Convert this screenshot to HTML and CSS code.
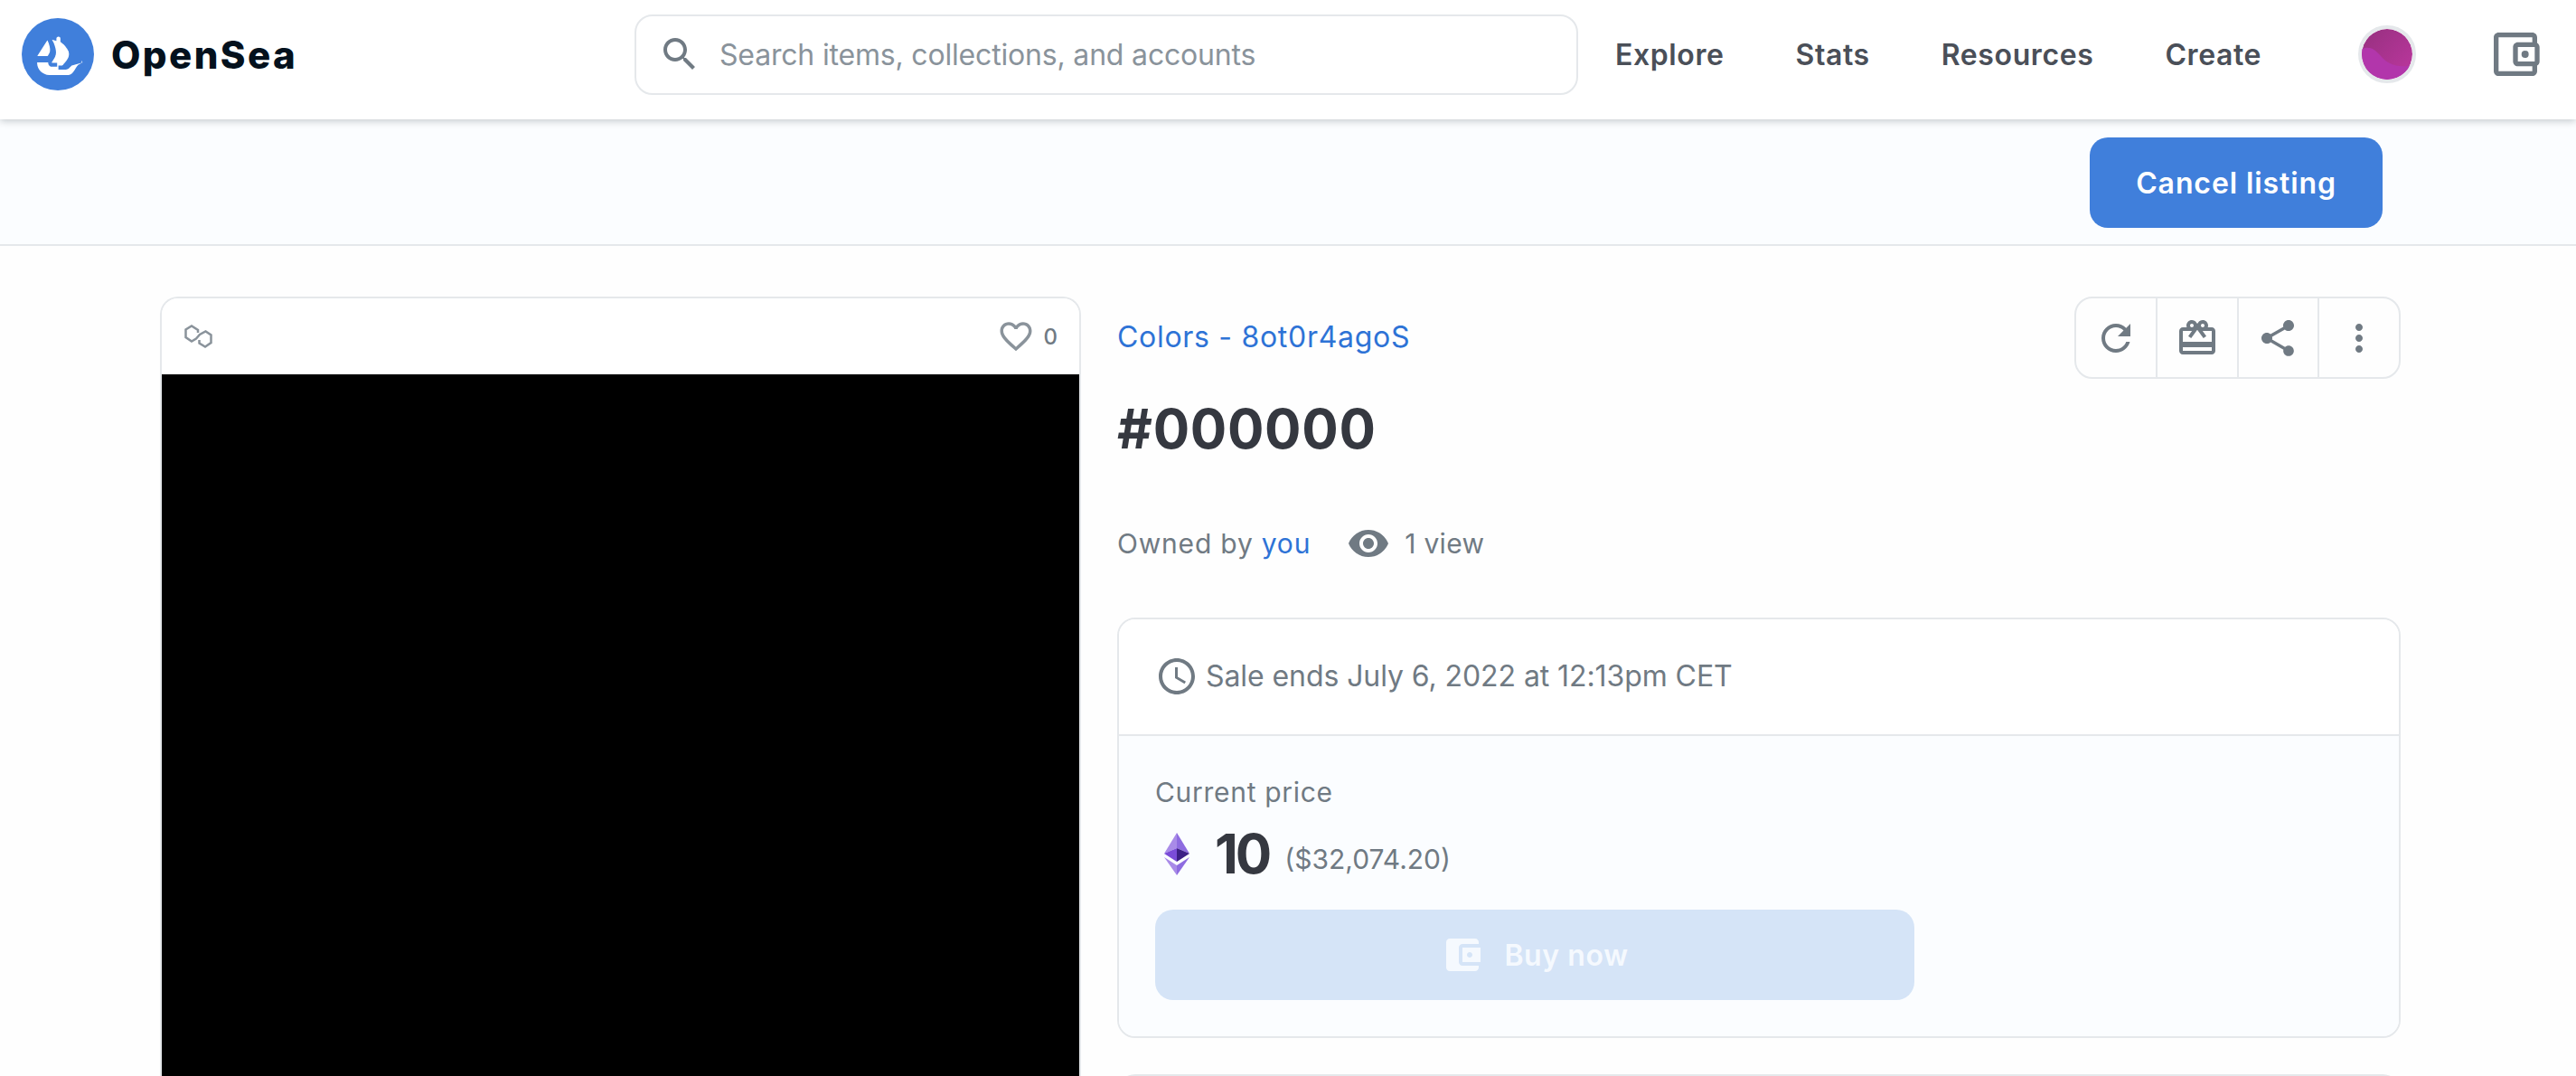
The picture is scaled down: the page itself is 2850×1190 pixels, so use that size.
FILE: index.html
```html
<!DOCTYPE html>
<html lang="en">
<head>
    <meta charset="UTF-8">
    <title>#000000 - Colors - 8ot0r4agoS | OpenSea</title>
    <link rel="stylesheet" href="styles.css">
</head>
<body>
    <header class="topbar">
        <a class="brand">
            <svg class="brand-logo" viewBox="0 0 90 90">
                <circle cx="45" cy="45" r="45" fill="#407fdb"/>
                <path fill="#fff" d="M19.7 46.6l.2-.3 11.7-18.3c.2-.3.6-.2.7.1 2 4.4 3.6 9.8 2.9 13.2-.3 1.4-1.2 3.3-2.3 5.1-.1.3-.3.5-.4.7-.1.1-.2.2-.3.2H20c-.3 0-.5-.4-.3-.7z"/>
                <path fill="#fff" d="M74.6 52.7v2.9c0 .2-.1.3-.2.4-.9.4-4 1.8-5.3 3.6-3.3 4.6-5.8 11.2-11.4 11.2H34.3C26 70.8 19.2 64 19.2 55.7v-.3c0-.2.2-.4.4-.4h13c.3 0 .5.2.4.5-.1.8.1 1.7.5 2.5.8 1.6 2.4 2.6 4.2 2.6h6.4v-5h-6.3c-.3 0-.5-.4-.3-.7l.2-.3c.6-.9 1.5-2.2 2.3-3.7.6-1 1.2-2.1 1.7-3.2.1-.2.2-.4.2-.6.1-.3.2-.7.3-.9.1-.3.2-.5.2-.7.2-.9.3-1.9.3-2.9 0-.4 0-.8-.1-1.2 0-.4-.1-.9-.1-1.3 0-.4-.1-.7-.2-1.1-.1-.5-.2-1.1-.3-1.6l-.1-.2c-.1-.4-.2-.7-.3-1.1-.3-1.1-.7-2.1-1-3.1-.1-.4-.3-.7-.4-1.1-.2-.5-.4-1-.6-1.4-.1-.2-.2-.4-.3-.6-.1-.2-.2-.4-.3-.6l-.2-.4-.8-1.4c-.1-.2.1-.4.3-.4l4.9 1.3v-2.9c0-1.4 1.1-2.5 2.5-2.5.7 0 1.3.3 1.8.7.4.5.7 1.1.7 1.8v4.3l.5.1.1.1.5.4c.2.1.4.3.6.5.4.3.9.7 1.4 1.2.1.1.3.2.4.3.6.6 1.3 1.2 1.9 1.9.2.2.4.4.5.6.2.2.4.5.6.7.2.3.5.6.7.9.1.1.2.3.3.5.3.4.5.7.8 1.1.1.2.2.4.4.6.3.5.5 1 .8 1.5.1.2.2.5.3.7.3.6.5 1.2.6 1.9 0 .1.1.3.1.4 0 .2.1.4.1.6.1.6 0 1.3 0 1.9 0 .5-.1.9-.2 1.4-.1.4-.2.8-.3 1.2-.2.4-.3.8-.5 1.2-.4.8-.8 1.6-1.3 2.3-.2.3-.3.6-.5.8-.2.3-.4.5-.6.8-.2.3-.4.6-.7.9-.2.3-.4.5-.7.8-.3.4-.6.7-.9 1.1-.2.2-.4.5-.6.7-.2.2-.4.5-.6.7-.3.3-.6.6-.8.8l-.5.5-.1.1h-4.8v5H55c1.3 0 2.6-.5 3.6-1.3.4-.3 1.8-1.6 3.5-3.5.1-.1.1-.1.2-.1l13.1-3.8c.3-.1.5.1.5.4z"/>
            </svg>
            <span class="brand-name">OpenSea</span>
        </a>
        <div class="search">
            <svg class="icon icon-search" viewBox="0 0 24 24"><path d="M15.5 14h-.79l-.28-.27C15.41 12.59 16 11.11 16 9.5 16 5.91 13.09 3 9.5 3S3 5.91 3 9.5 5.91 16 9.5 16c1.61 0 3.09-.59 4.23-1.57l.27.28v.79l5 4.99L20.49 19l-4.99-5zm-6 0C7.01 14 5 11.99 5 9.5S7.01 5 9.5 5 14 7.01 14 9.5 11.99 14 9.5 14z"/></svg>
            <span class="search-text">Search items, collections, and accounts</span>
        </div>
        <nav class="nav">
            <a>Explore</a>
            <a>Stats</a>
            <a>Resources</a>
            <a>Create</a>
        </nav>
        <div class="avatar">
            <svg viewBox="0 0 56 56">
                <defs>
                    <linearGradient id="avatarGrad" x1="0" y1="0" x2="1" y2="1">
                        <stop offset="0" stop-color="#96307f"/>
                        <stop offset="1" stop-color="#bd379f"/>
                    </linearGradient>
                </defs>
                <circle cx="28" cy="28" r="28" fill="url(#avatarGrad)"/>
                <path fill="#b236ab" d="M0 22C10 18 16 24 22 31S40 44 56 40V56H0Z"/>
            </svg>
        </div>
        <svg class="icon icon-wallet" viewBox="0 0 24 24"><path d="M21 7.28V5c0-1.1-.9-2-2-2H5c-1.11 0-2 .9-2 2v14c0 1.1.89 2 2 2h14c1.1 0 2-.9 2-2v-2.28c.59-.35 1-.98 1-1.72V9c0-.74-.41-1.37-1-1.72zM20 9v6h-7V9h7zM5 19V5h14v2h-6c-1.1 0-2 .9-2 2v6c0 1.1.9 2 2 2h6v2H5z"/><circle cx="16" cy="12" r="1.5"/></svg>
    </header>

    <div class="actionbar">
        <button class="btn-cancel">Cancel listing</button>
    </div>

    <main class="item">
        <section class="preview">
            <div class="preview-head">
                <svg class="chain" viewBox="0 0 32 26" fill="none" stroke="#8a939b" stroke-width="2.500">
                    <path d="M16 9V6L9 1.500 2.500 5.500V14L9 18.500 14 15.500 18 11 24.500 7.500 30.500 11.500V20L24 24.500 17.500 20.500V17"/>
                </svg>
                <div class="likes">
                    <svg class="icon icon-heart" viewBox="0 0 24 24"><path d="M16.5 3c-1.74 0-3.41.81-4.5 2.09C10.91 3.81 9.24 3 7.5 3 4.420 3 2 5.420 2 8.500c0 3.780 3.400 6.860 8.550 11.540L12 21.350l1.450-1.320C18.600 15.360 22 12.280 22 8.500 22 5.420 19.580 3 16.500 3zm-4.400 15.550l-.1.1-.1-.1C7.140 14.240 4 11.390 4 8.500 4 6.500 5.500 5 7.500 5c1.540 0 3.040.99 3.570 2.360h1.870C13.460 5.990 14.960 5 16.500 5c2 0 3.500 1.500 3.500 3.500 0 2.890-3.140 5.740-7.900 10.050z"/></svg>
                    <span>0</span>
                </div>
            </div>
            <div class="preview-image"></div>
        </section>

        <section class="details">
            <div class="details-top">
                <a class="collection">Colors - 8ot0r4agoS</a>
                <div class="tools">
                    <div class="tool"><svg class="icon" viewBox="0 0 24 24"><path d="M17.650 6.350C16.200 4.900 14.210 4 12 4c-4.420 0-7.990 3.580-7.990 8s3.570 8 7.990 8c3.730 0 6.840-2.550 7.730-6h-2.080c-.82 2.330-3.040 4-5.650 4-3.310 0-6-2.690-6-6s2.690-6 6-6c1.660 0 3.140.69 4.220 1.780L13 11h7V4l-2.350 2.350z"/></svg></div>
                    <div class="tool"><svg class="icon" viewBox="0 0 24 24"><path d="M20 6h-2.180c.11-.31.18-.65.18-1 0-1.660-1.340-3-3-3-1.050 0-1.960.54-2.500 1.350l-.5.67-.5-.68C10.960 2.540 10.050 2 9 2 7.340 2 6 3.340 6 5c0 .35.07.69.18 1H4c-1.110 0-1.990.89-1.990 2L2 19c0 1.110.89 2 2 2h16c1.110 0 2-.89 2-2V8c0-1.110-.89-2-2-2zm-5-2c.55 0 1 .45 1 1s-.45 1-1 1-1-.45-1-1 .45-1 1-1zM9 4c.55 0 1 .45 1 1s-.45 1-1 1-1-.45-1-1 .45-1 1-1zm11 15H4v-2h16v2zm0-5H4V8h5.080L7 10.830 8.620 12 11 8.760l1-1.360 1 1.360L15.380 12 17 10.830 14.920 8H20v6z"/></svg></div>
                    <div class="tool"><svg class="icon" viewBox="0 0 24 24"><path d="M18 16.080c-.76 0-1.440.3-1.960.77L8.910 12.700c.05-.23.09-.46.09-.7s-.04-.47-.09-.7l7.050-4.110c.54.5 1.250.81 2.040.81 1.660 0 3-1.340 3-3s-1.340-3-3-3-3 1.340-3 3c0 .24.04.47.09.7L8.040 9.810C7.500 9.310 6.790 9 6 9c-1.660 0-3 1.340-3 3s1.340 3 3 3c.79 0 1.500-.31 2.040-.81l7.120 4.160c-.05.21-.08.43-.08.65 0 1.610 1.310 2.920 2.920 2.920 1.610 0 2.920-1.310 2.920-2.920s-1.310-2.920-2.920-2.920z"/></svg></div>
                    <div class="tool"><svg class="icon" viewBox="0 0 24 24"><path d="M12 8c1.100 0 2-.9 2-2s-.9-2-2-2-2 .9-2 2 .9 2 2 2zm0 2c-1.100 0-2 .9-2 2s.9 2 2 2 2-.9 2-2-.9-2-2-2zm0 6c-1.100 0-2 .9-2 2s.9 2 2 2 2-.9 2-2-.9-2-2-2z"/></svg></div>
                </div>
            </div>
            <h1 class="title">#000000</h1>
            <div class="owner">
                <span class="owned">Owned by <a>you</a></span>
                <svg class="icon icon-eye" viewBox="0 0 24 24"><path d="M12 4.500C7 4.500 2.730 7.610 1 12c1.730 4.390 6 7.500 11 7.500s9.270-3.110 11-7.500c-1.730-4.390-6-7.500-11-7.500zM12 17c-2.760 0-5-2.240-5-5s2.240-5 5-5 5 2.240 5 5-2.240 5-5 5zm0-8c-1.660 0-3 1.340-3 3s1.340 3 3 3 3-1.340 3-3-1.340-3-3-3z"/></svg>
                <span>1 view</span>
            </div>

            <div class="sale">
                <div class="sale-head">
                    <svg class="icon icon-clock" viewBox="0 0 24 24"><path d="M11.990 2C6.470 2 2 6.480 2 12s4.470 10 9.990 10C17.520 22 22 17.520 22 12S17.520 2 11.990 2zM12 20c-4.420 0-8-3.580-8-8s3.580-8 8-8 8 3.580 8 8-3.580 8-8 8zm.5-13H11v6l5.250 3.150.75-1.230-4.500-2.670z"/></svg>
                    <span>Sale ends July 6, 2022 at 12:13pm CET</span>
                </div>
                <div class="sale-body">
                    <div class="price-label">Current price</div>
                    <div class="price">
                        <svg class="eth" viewBox="0 0 28 47">
                            <polygon fill="#a98be8" points="14,0 0,23 14,17"/>
                            <polygon fill="#8e6ce0" points="14,0 28,23 14,17"/>
                            <polygon fill="#7a4cd8" points="0,23 14,17 14,32"/>
                            <polygon fill="#3c1f86" points="28,23 14,17 14,32"/>
                            <polygon fill="#a98be8" points="0,27 14,36 14,47"/>
                            <polygon fill="#8e6ce0" points="28,27 14,36 14,47"/>
                        </svg>
                        <span class="price-value">10</span>
                        <span class="price-usd">($32,074.20)</span>
                    </div>
                    <button class="btn-buy">
                        <svg class="icon" viewBox="0 0 24 24"><path d="M21 18v1c0 1.100-.9 2-2 2H5c-1.110 0-2-.9-2-2V5c0-1.100.89-2 2-2h14c1.100 0 2 .9 2 2v1h-9c-1.110 0-2 .9-2 2v8c0 1.100.89 2 2 2h9zm-9-2h10V8H12v8zm4-2.500c-.83 0-1.500-.67-1.500-1.500s.67-1.500 1.500-1.500 1.500.67 1.500 1.500-.67 1.500-1.500 1.500z"/></svg>
                        <span>Buy now</span>
                    </button>
                </div>
            </div>
            <div class="next-panel"></div>
        </section>
    </main>
</body>
</html>
```

FILE: styles.css
```css
* {
    box-sizing: border-box;
}
html, body {
    height: 1190px;
    overflow: hidden;
}
body {
    margin: 0;
    background-color: #fefefe;
    font-family: Inter, "Noto Sans", sans-serif;
    color: #353840;
}
.icon {
    fill: #707a83;
    width: 48px;
    height: 48px;
    flex: none;
}

/* top bar */
.topbar {
    position: relative;
    display: flex;
    align-items: center;
    height: 132px;
    padding: 0 0 12px 24px;
    background-color: #fff;
    box-shadow: 0 2px 8px rgba(4, 17, 29, 0.22);
}
.brand {
    display: flex;
    align-items: center;
    gap: 19px;
    width: 678px;
}
.brand-logo {
    width: 80px;
    height: 80px;
}
.brand-name {
    font-size: 42px;
    font-weight: 800;
    letter-spacing: 2.4px;
    color: #04111d;
}
.search {
    display: flex;
    align-items: center;
    width: 1044px;
    height: 89px;
    padding-left: 24px;
    border: 2px solid #e5e8eb;
    border-radius: 20px;
}
.search-text {
    margin-left: 20px;
    font-size: 32px;
    letter-spacing: -0.18px;
    color: #8a939b;
}
.nav {
    display: flex;
    gap: 79px;
    margin-left: 41px;
    font-size: 32px;
    font-weight: 600;
    letter-spacing: 0.6px;
    color: #4a4f58;
}
.avatar {
    width: 64px;
    height: 64px;
    margin-left: 107px;
    border: 4px solid #e5e8eb;
    border-radius: 50%;
    overflow: hidden;
}
.avatar svg {
    display: block;
    width: 100%;
    height: 100%;
}
.icon-wallet {
    width: 64px;
    height: 64px;
    margin-left: 78px;
}

/* action bar */
.actionbar {
    display: flex;
    justify-content: flex-end;
    height: 140px;
    padding: 20px 214px 0 0;
    background-color: #fbfdff;
    border-bottom: 2px solid #e5e8eb;
}
.btn-cancel {
    width: 324px;
    height: 100px;
    border: none;
    border-radius: 20px;
    background-color: #407fdb;
    color: #fff;
    font-family: inherit;
    font-size: 32px;
    font-weight: 600;
    letter-spacing: 0.9px;
}

/* item layout */
.item {
    display: flex;
    align-items: flex-start;
    gap: 40px;
    padding: 56px 0 0 177px;
}
.preview {
    width: 1019px;
    border: 2px solid #e5e8eb;
    border-bottom: none;
    border-radius: 20px 20px 0 0;
    overflow: hidden;
}
.preview-head {
    display: flex;
    align-items: center;
    justify-content: space-between;
    height: 84px;
    padding: 0 24px;
    background-color: #fff;
}
.chain {
    width: 32px;
    height: 26px;
}
.likes {
    display: flex;
    align-items: center;
    gap: 10px;
    font-size: 24px;
    font-weight: 500;
    color: #707a83;
}
.icon-heart {
    width: 42px;
    height: 42px;
    fill: #8a939b;
}
.preview-image {
    height: 800px;
    background-color: #000;
}

/* details */
.details {
    width: 1420px;
}
.details-top {
    display: flex;
    align-items: center;
    justify-content: space-between;
}
.collection {
    margin-bottom: 2px;
    font-size: 32px;
    letter-spacing: 0.7px;
    color: #2e73d6;
}
.tools {
    display: flex;
    width: 361px;
    height: 91px;
    border: 2px solid #e5e8eb;
    border-radius: 20px;
}
.tool {
    display: flex;
    flex: 1;
    align-items: center;
    justify-content: center;
    border-left: 2px solid #e5e8eb;
}
.tool:first-child {
    border-left: none;
}
.title {
    margin: 13px 0 0;
    font-size: 60px;
    line-height: 84px;
    font-weight: 700;
    letter-spacing: 0.7px;
    color: #353840;
}
.owner {
    display: flex;
    align-items: center;
    margin-top: 61px;
    font-size: 30px;
    letter-spacing: 0.3px;
    color: #707a83;
}
.owned {
    letter-spacing: 0.8px;
}
.owner a {
    color: #2e73d6;
}
.icon-eye {
    width: 48px;
    height: 48px;
    margin: 0 16px 0 40px;
}
.sale {
    margin-top: 58px;
    border: 2px solid #e5e8eb;
    border-radius: 20px;
    overflow: hidden;
    height: 465px;
}
.sale-head {
    display: flex;
    align-items: center;
    gap: 8px;
    height: 129px;
    padding: 0 0 2px 40px;
    font-size: 32px;
    letter-spacing: -0.08px;
    color: #707a83;
    background-color: #fff;
    border-bottom: 2px solid #e5e8eb;
}
.sale-body {
    height: 334px;
    padding: 44px 0 0 40px;
    background-color: #fbfdff;
}
.price-label {
    font-size: 30px;
    letter-spacing: 0.7px;
    color: #707a83;
}
.price {
    display: flex;
    align-items: center;
    margin-top: 14px;
    padding-left: 10px;
}
.eth {
    width: 28px;
    height: 47px;
}
.price-value {
    margin-left: 28px;
    font-size: 60px;
    font-weight: 700;
    letter-spacing: -3px;
    color: #353840;
}
.price-usd {
    margin: 12px 0 0 17px;
    font-size: 30px;
    color: #707a83;
}
.btn-buy {
    display: flex;
    align-items: center;
    justify-content: center;
    gap: 22px;
    width: 840px;
    height: 100px;
    margin-top: 26px;
    border: none;
    border-radius: 20px;
    background-color: #d5e4f7;
    color: #f5f9fe;
    font-family: inherit;
    font-size: 32px;
    font-weight: 600;
    letter-spacing: 0.6px;
}
.btn-buy .icon {
    fill: #f5f9fe;
}
.next-panel {
    height: 20px;
    margin-top: 40px;
    border: 2px solid #e5e8eb;
    border-bottom: none;
    border-radius: 20px 20px 0 0;
}
```
